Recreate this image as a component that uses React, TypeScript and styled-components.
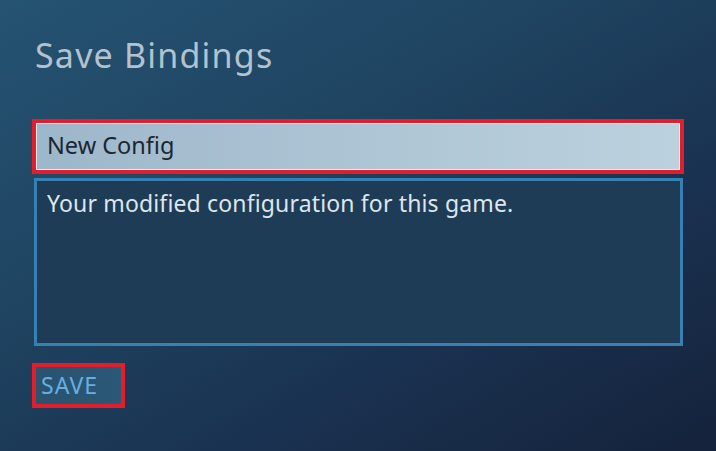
import React from 'react'
import styled, { createGlobalStyle } from 'styled-components'

const GlobalStyle = createGlobalStyle`
  html, body {
    margin: 0;
    padding: 0;
    height: 100%;
  }
  body {
    font-family: 'Noto Sans', 'Open Sans', sans-serif;
    background: #1a2c47;
  }
`

const Page = styled.div`
  box-sizing: border-box;
  width: 716px;
  height: 451px;
  padding: 32px 32px 0;
  display: flex;
  flex-direction: column;
  align-items: flex-start;
  background: linear-gradient(150deg, #255372 0%, #1f4562 35%, #1a3352 65%, #15223b 100%);
  overflow: hidden;
`

const Title = styled.h1`
  margin: 0 0 0 3px;
  font-size: 34px;
  font-weight: 400;
  line-height: 46px;
  color: #b4c2cd;
  letter-spacing: 1.2px;
`

const Highlight = styled.div<{ $width: number; $gap: number }>`
  box-sizing: border-box;
  width: ${(p) => p.$width}px;
  margin-top: ${(p) => p.$gap}px;
  border: 4px solid #e31e2a;
`

const NameInput = styled.input`
  box-sizing: border-box;
  display: block;
  width: 100%;
  height: 47px;
  margin: 0;
  padding: 0 10px 3px;
  border: 1px solid #e9eff3;
  background: linear-gradient(90deg, #9db7ca 0%, #b0c7d6 60%, #bcd1de 100%);
  font-family: inherit;
  font-size: 23.5px;
  color: #1b2732;
  outline: none;
`

const Description = styled.textarea`
  box-sizing: border-box;
  display: block;
  width: 649px;
  height: 168px;
  margin: 4px 0 0 2px;
  padding: 7px 10px;
  border: 3px solid #3780b2;
  background: #1f3c56;
  font-family: inherit;
  font-size: 23px;
  line-height: 30px;
  letter-spacing: 0.15px;
  color: #dde6ed;
  resize: none;
  outline: none;
`

const SaveButton = styled.button`
  box-sizing: border-box;
  display: block;
  width: 100%;
  height: 37px;
  margin: 0;
  padding: 0 0 1px 5px;
  border: none;
  text-align: left;
  background: linear-gradient(90deg, #29536f 0%, #2a5876 100%);
  font-family: inherit;
  font-size: 23px;
  letter-spacing: 1px;
  color: #68aee0;
  cursor: pointer;
`

export default function App() {
  return (
    <>
      <GlobalStyle />
      <Page>
        <Title>Save Bindings</Title>
        <Highlight $width={652} $gap={41}>
          <NameInput defaultValue="New Config" readOnly />
        </Highlight>
        <Description defaultValue="Your modified configuration for this game." readOnly />
        <Highlight $width={93} $gap={17}>
          <SaveButton>SAVE</SaveButton>
        </Highlight>
      </Page>
    </>
  )
}
